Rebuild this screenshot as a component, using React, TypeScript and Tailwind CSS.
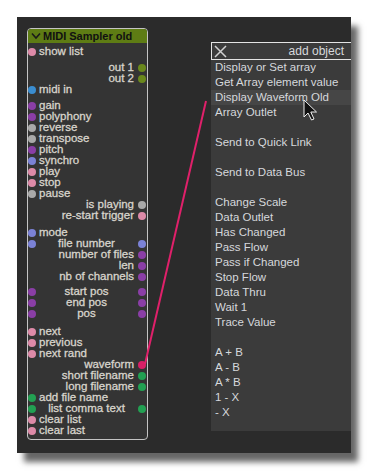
import React from "react";

type Port = string | null;

interface PortRow {
  label: string;
  left?: Port;
  right?: Port;
  gap?: number;
}

const PINK = "bg-[#dd8aa8]";
const OLIVE = "bg-[#6a881c]";
const BLUE = "bg-[#3a8dd0]";
const PURPLE = "bg-[#8a3ea6]";
const GRAY = "bg-[#a9a9a9]";
const VIOLET = "bg-[#7b82d6]";
const CRIMSON = "bg-[#d81f66]";
const GREEN = "bg-[#22a052]";

const ROWS: PortRow[] = [
  { label: "show list", left: PINK },
  { label: "out 1", right: OLIVE, gap: 5 },
  { label: "out 2", right: OLIVE },
  { label: "midi in", left: BLUE },
  { label: "gain", left: PURPLE, gap: 5 },
  { label: "polyphony", left: PURPLE },
  { label: "reverse", left: GRAY },
  { label: "transpose", left: GRAY },
  { label: "pitch", left: PURPLE },
  { label: "synchro", left: VIOLET },
  { label: "play", left: PINK },
  { label: "stop", left: PINK },
  { label: "pause", left: GRAY },
  { label: "is playing", right: GRAY },
  { label: "re-start trigger", right: PINK },
  { label: "mode", left: VIOLET, gap: 6 },
  { label: "file number", left: VIOLET, right: VIOLET },
  { label: "number of files", right: PURPLE },
  { label: "len", right: PURPLE },
  { label: "nb of channels", right: PURPLE },
  { label: "start pos", left: PURPLE, right: PURPLE, gap: 4 },
  { label: "end pos", left: PURPLE, right: PURPLE },
  { label: "pos", left: PURPLE, right: PURPLE },
  { label: "next", left: PINK, gap: 7 },
  { label: "previous", left: PINK },
  { label: "next rand", left: PINK },
  { label: "waveform", right: CRIMSON },
  { label: "short filename", right: GREEN },
  { label: "long filename", right: GREEN },
  { label: "add file name", left: GREEN },
  { label: "list comma text", left: GREEN, right: GREEN },
  { label: "clear list", left: PINK },
  { label: "clear last", left: PINK },
];

const MENU: string[] = [
  "Display or Set array",
  "Get Array element value",
  "Display Waveform Old",
  "Array Outlet",
  "",
  "Send to Quick Link",
  "",
  "Send to Data Bus",
  "",
  "Change Scale",
  "Data Outlet",
  "Has Changed",
  "Pass Flow",
  "Pass if Changed",
  "Stop Flow",
  "Data Thru",
  "Wait 1",
  "Trace Value",
  "",
  "A + B",
  "A - B",
  "A * B",
  "1 - X",
  "- X",
];

function Dot({ color }: { color?: Port }) {
  return <span className={`size-2 shrink-0 rounded-full ${color ?? ""}`} />;
}

function Row({ row }: { row: PortRow }) {
  const align =
    row.left && row.right ? "text-center" : row.right ? "text-right" : "text-left";
  return (
    <div className="flex h-[11px] items-center" style={row.gap ? { marginTop: row.gap } : undefined}>
      <Dot color={row.left} />
      <span className={`ml-[3px] mr-[4px] flex-1 whitespace-nowrap leading-[11px] ${align}`}>
        {row.label}
      </span>
      <Dot color={row.right} />
      <span className="w-px" />
    </div>
  );
}

function SamplerNode() {
  return (
    <div className="flex h-[412px] w-[121px] shrink-0 flex-col rounded-[4px] border border-[#c4c4c4] bg-[#343434] text-[11.5px] text-[#d8d4cc] [-webkit-text-stroke:0.3px_#d8d4cc]">
      <div className="flex h-[14px] items-center gap-[2px] rounded-t-[3px] bg-[#5e7c14] pl-[3px] text-[11px] font-bold text-[#111] [-webkit-text-stroke:0]">
        <svg width="10" height="8" viewBox="0 0 10 8" className="shrink-0">
          <path d="M1 1.5 L5 6 L9 1.5" fill="none" stroke="#1a1a1a" strokeWidth="1.6" />
        </svg>
        <span className="leading-[14px]">MIDI Sampler old</span>
      </div>
      <div className="mt-[3px] flex flex-col">
        {ROWS.map((r) => (
          <Row key={r.label} row={r} />
        ))}
      </div>
    </div>
  );
}

function AddObjectMenu() {
  return (
    <div className="mt-[14px] ml-[63px] flex w-[141px] shrink-0 flex-col bg-[#3b3b3b] pb-[11px] text-[11.5px] text-[#d6d8dc]">
      <div className="flex h-[18px] items-center border-y border-l border-[#e4e4e4] pl-[2px] pr-[8px]">
        <svg width="13" height="13" viewBox="0 0 13 13" className="shrink-0">
          <path d="M1 1 L12 12 M12 1 L1 12" stroke="#d0d0d0" strokeWidth="1.5" />
        </svg>
        <span className="ml-auto text-[12px] leading-[16px]">add object</span>
      </div>
      {MENU.map((item, i) => (
        <div
          key={i}
          className={`h-[15px] whitespace-nowrap pl-[4px] leading-[15px] ${
            item === "Display Waveform Old" ? "bg-[#464646]" : ""
          }`}
        >
          {item}
        </div>
      ))}
    </div>
  );
}

export default function App() {
  return (
    <div className="h-[471px] w-[369px] bg-white pl-[17px] pt-[17px] [font-family:'Liberation_Sans',Arial,sans-serif]">
      <div className="relative flex h-[436px] w-[334px] items-start overflow-hidden bg-[#2b2b2b] pl-[10px] pt-[11px] shadow-[7px_9px_6px_rgba(0,0,0,0.6)]">
        <SamplerNode />
        <AddObjectMenu />
        <svg className="pointer-events-none absolute inset-0" width="334" height="436">
          <line x1="128" y1="347" x2="189" y2="84" stroke="#e0206a" strokeWidth="2" />
          <path
            d="M287 83 L287 100 L291 96 L294.5 103 L297 102 L293.8 95 L299.5 95 Z"
            fill="#111"
            stroke="#f0f0f0"
            strokeWidth="1"
          />
        </svg>
      </div>
    </div>
  );
}
